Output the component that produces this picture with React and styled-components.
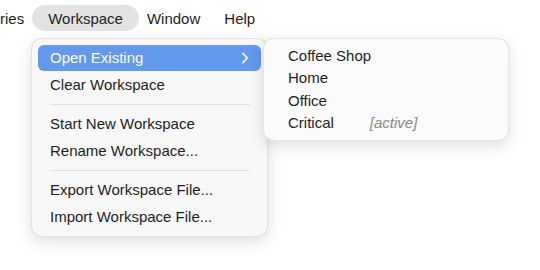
import React from 'react';
import styled, {createGlobalStyle} from 'styled-components';

const GlobalStyle = createGlobalStyle`
  body {
    margin: 0;
    background: #ffffff;
    font-family: "Liberation Sans", Arial, sans-serif;
    font-size: 15px;
    color: #222222;
  }
`;

const Page = styled.div`
  position: relative;
  width: 540px;
  height: 270px;
  overflow: hidden;
`;

const MenuBar = styled.div`
  display: flex;
  align-items: center;
  height: 26px;
  margin-top: 5px;
  margin-left: -12px;
`;

const BarItem = styled.div`
  display: flex;
  align-items: center;
  height: 26px;
  padding: 0 ${props => (props.active ? '16px' : '12px')};
  margin: 0 ${props => (props.active ? '-4px' : '0')};
  border-radius: 13px;
  background: ${props => (props.active ? '#e3e3e3' : 'transparent')};
  color: #1e1e1e;
`;

const Dropdown = styled.div`
  position: absolute;
  left: 31px;
  top: 38px;
  width: 237px;
  box-sizing: border-box;
  padding: 6px 6px 6px;
  display: flex;
  flex-direction: column;
  gap: 1px;
  background: #f8f8f8;
  border: 1px solid rgba(0, 0, 0, 0.09);
  border-radius: 11px;
  box-shadow: 0 5px 16px rgba(0, 0, 0, 0.13);
`;

const Row = styled.div`
  display: flex;
  align-items: center;
  justify-content: space-between;
  height: 26px;
  padding: 0 12px 1px 12px;
  box-sizing: border-box;
  border-radius: 6px;
  background: ${props => (props.highlighted ? '#6398ef' : 'transparent')};
  color: ${props => (props.highlighted ? '#ffffff' : '#1e1e1e')};
`;

const Separator = styled.div`
  height: 1px;
  margin: 5px 11px 5px 12px;
  background: #e1e1e1;
`;

const Submenu = styled.div`
  position: absolute;
  left: 263px;
  top: 38px;
  width: 246px;
  box-sizing: border-box;
  padding: 5px 6px 6px;
  display: flex;
  flex-direction: column;
  background: #fbfbfb;
  border: 1px solid rgba(0, 0, 0, 0.09);
  border-radius: 11px;
  box-shadow: 0 5px 16px rgba(0, 0, 0, 0.13);
`;

const SubRow = styled.div`
  display: flex;
  align-items: center;
  height: 22.5px;
  padding-left: 18px;
  color: #1e1e1e;
`;

const Tag = styled.span`
  margin-left: 36px;
  font-style: italic;
  color: #8a8a8a;
`;

const Chevron = () => (
  <svg width="8" height="12" viewBox="0 0 8 12">
    <path d="M2 1.5 L6.2 6 L2 10.5" fill="none" stroke="#ffffff" strokeWidth="1.8"
          strokeLinecap="round" strokeLinejoin="round"/>
  </svg>
);

export default function App() {
  return (
    <Page>
      <GlobalStyle/>
      <MenuBar>
        <BarItem>ries</BarItem>
        <BarItem active>Workspace</BarItem>
        <BarItem>Window</BarItem>
        <BarItem>Help</BarItem>
      </MenuBar>
      <Dropdown>
        <Row highlighted>
          <span>Open Existing</span>
          <Chevron/>
        </Row>
        <Row>Clear Workspace</Row>
        <Separator/>
        <Row>Start New Workspace</Row>
        <Row>Rename Workspace...</Row>
        <Separator/>
        <Row>Export Workspace File...</Row>
        <Row>Import Workspace File...</Row>
      </Dropdown>
      <Submenu>
        <SubRow>Coffee Shop</SubRow>
        <SubRow>Home</SubRow>
        <SubRow>Office</SubRow>
        <SubRow>Critical<Tag>[active]</Tag></SubRow>
      </Submenu>
    </Page>
  );
}
